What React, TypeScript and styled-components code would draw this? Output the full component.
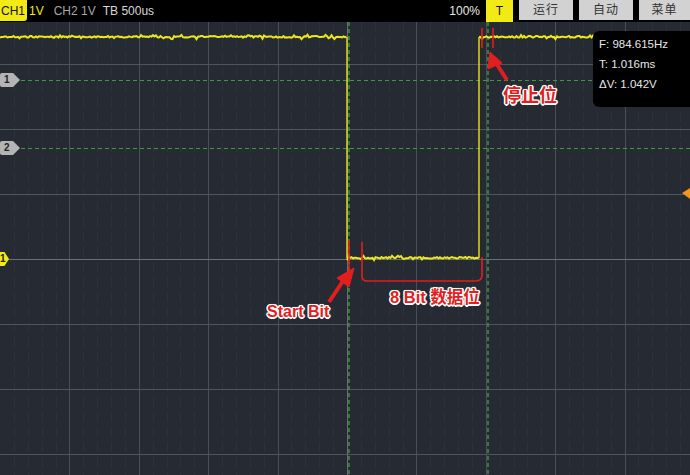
import React from "react";
import styled, { createGlobalStyle } from "styled-components";

const GlobalStyle = createGlobalStyle`
  html, body { margin: 0; padding: 0; background: #000; }
  body { font-family: "Liberation Sans", "Noto Sans CJK SC", sans-serif; }
`;

const W = 690;
const H = 453;
const DIVX = 69.4;
const CY = 237;
const DIVY = 65;

const Screen = styled.div`
  width: 690px;
  height: 475px;
  display: flex;
  flex-direction: column;
  background: #000;
  overflow: hidden;
`;

const Header = styled.div`
  height: 22px;
  flex: none;
  display: flex;
  align-items: flex-start;
  background: #000;
  font-size: 12px;
  line-height: 20px;
`;

const ChBadge = styled.div`
  height: 21px;
  padding: 0 2px 0 1px;
  background: #f2ea17;
  color: #111;
  border-bottom-right-radius: 3px;
  display: flex;
  align-items: center;
`;

const HText = styled.span<{ $color: string; $ml: number }>`
  color: ${(p) => p.$color};
  margin-left: ${(p) => p.$ml}px;
  height: 21px;
  display: flex;
  align-items: center;
`;

const Spacer = styled.div`
  flex: 1;
`;

const TBox = styled.div`
  width: 27px;
  height: 22px;
  margin-left: 6px;
  background: #f2ea17;
  color: #111;
  display: flex;
  align-items: center;
  justify-content: center;
  font-size: 12px;
`;

const MenuButton = styled.div<{ $w: number }>`
  width: ${(p) => p.$w}px;
  height: 20px;
  margin-left: 6px;
  background: #d2d2d2;
  color: #333;
  display: flex;
  align-items: center;
  justify-content: center;
  font-size: 12px;
  letter-spacing: 1px;
`;

const Scope = styled.div`
  position: relative;
  flex: 1;
  background: #262a33;
  overflow: hidden;
`;

const Canvas = styled.svg`
  display: block;
  width: 690px;
  height: 453px;
`;

const Tag = styled.div<{ $top: number; $bg: string; $w: number; $left: number }>`
  position: absolute;
  left: ${(p) => p.$left}px;
  top: ${(p) => p.$top}px;
  width: ${(p) => p.$w}px;
  height: 14px;
  background: ${(p) => p.$bg};
  color: #222;
  font-size: 10px;
  font-weight: bold;
  line-height: 14px;
  padding-left: 4px;
  box-sizing: border-box;
  clip-path: polygon(0 0, 65% 0, 100% 50%, 65% 100%, 0 100%);
  border-radius: 2px;
`;

const InfoBox = styled.div`
  position: absolute;
  left: 593px;
  top: 9px;
  width: 110px;
  height: 76px;
  background: #000;
  border-radius: 6px;
  color: #e6e6e6;
  font-size: 11.5px;
  padding: 6px 0 0 6px;
  box-sizing: border-box;
  display: flex;
  flex-direction: column;
  gap: 6px;
  line-height: 14px;
`;

const Note = styled.div<{ $left: number; $top: number; $size: number }>`
  position: absolute;
  left: ${(p) => p.$left}px;
  top: ${(p) => p.$top}px;
  font-size: ${(p) => p.$size}px;
  font-weight: bold;
  color: #e31e1e;
  white-space: nowrap;
  font-family: "Liberation Sans", "Noto Sans CJK SC", sans-serif;
  text-shadow: -1px -1px 0 #fff, 1px -1px 0 #fff, -1px 1px 0 #fff, 1px 1px 0 #fff,
    0 -1.5px 0 #fff, 0 1.5px 0 #fff, -1.5px 0 0 #fff, 1.5px 0 0 #fff, 0 0 2px #fff;
`;

function rnd(i: number) {
  const s = Math.sin(i * 12.9898 + 78.233) * 43758.5453;
  return s - Math.floor(s);
}

function noisy(x0: number, x1: number, y: number, seed: number) {
  const pts: string[] = [];
  for (let x = x0, k = 0; x <= x1; x += 1.5, k++) {
    const r = rnd(seed + k);
    const dy = r > 0.8 ? (rnd(seed + k * 3) - 0.5) * 4.5 : (r - 0.5) * 2;
    pts.push(`${x.toFixed(1)},${(y + dy).toFixed(1)}`);
  }
  return pts.join(" ");
}

const Grid: React.FC = () => {
  const vs: number[] = [];
  for (let k = 1; k <= 9; k++) vs.push(Math.round(k * DIVX) + 0.5);
  const hs: number[] = [];
  for (let k = -3; k <= 3; k++) hs.push(CY + k * DIVY + 0.5);
  const minorV: number[] = [];
  for (let k = 0; k < 50; k++) if (k % 5 !== 0) minorV.push(Math.round((k * DIVX) / 5) + 0.5);
  return (
    <g>
      {minorV.map((x) => (
        <line key={"mv" + x} x1={x} x2={x} y1={0} y2={H} stroke="#2d313b" strokeWidth={1} strokeDasharray="10 5" />
      ))}
      {vs.map((x) => (
        <line key={"v" + x} x1={x} x2={x} y1={0} y2={H} stroke="#4a4e57" strokeWidth={1} />
      ))}
      {hs.map((y) => (
        <line key={"h" + y} x1={0} x2={W} y1={y} y2={y} stroke="#50545d" strokeWidth={1} />
      ))}
      <line x1={347.5} x2={347.5} y1={0} y2={H} stroke="#6a6e76" strokeWidth={1} />
      <line x1={0} x2={W} y1={CY + 0.5} y2={CY + 0.5} stroke="#6a6e76" strokeWidth={1} />
    </g>
  );
};

const App: React.FC = () => {
  const hi = 15;
  const lo = 236;
  const fallX = 347;
  const riseX = 479;
  return (
    <Screen>
      <GlobalStyle />
      <Header>
        <ChBadge>CH1</ChBadge>
        <HText $color="#f2ea17" $ml={2}>1V</HText>
        <HText $color="#a8a8a8" $ml={10}>CH2 1V</HText>
        <HText $color="#d8d8d8" $ml={7}>TB 500us</HText>
        <Spacer />
        <HText $color="#e8e8e8" $ml={0}>100%</HText>
        <TBox>T</TBox>
        <MenuButton $w={54}>运行</MenuButton>
        <MenuButton $w={54}>自动</MenuButton>
        <MenuButton $w={51}>菜单</MenuButton>
      </Header>
      <Scope>
        <Canvas viewBox={`0 0 ${W} ${H}`}>
          <Grid />
          <line x1={0} x2={W} y1={58.5} y2={58.5} stroke="#3f9a3f" strokeWidth={1.2} strokeDasharray="4 3" />
          <line x1={0} x2={W} y1={126.5} y2={126.5} stroke="#3f9a3f" strokeWidth={1.2} strokeDasharray="4 3" />
          <line x1={349} x2={349} y1={0} y2={H} stroke="#3f9a3f" strokeWidth={1.4} strokeDasharray="4 3" />
          <line x1={488} x2={488} y1={0} y2={H} stroke="#3f9a3f" strokeWidth={1.4} strokeDasharray="4 3" />
          <polyline points={noisy(0, fallX, hi, 1)} fill="none" stroke="#ece81c" strokeWidth={2} />
          <line x1={fallX} x2={fallX} y1={hi} y2={lo} stroke="#dcd81c" strokeWidth={1.5} />
          <polyline points={noisy(fallX, riseX, lo, 700)} fill="none" stroke="#ece81c" strokeWidth={2} />
          <line x1={riseX} x2={riseX} y1={hi} y2={lo} stroke="#dcd81c" strokeWidth={1.5} />
          <polyline points={noisy(riseX, W, hi, 1400)} fill="none" stroke="#ece81c" strokeWidth={2} />
          <g stroke="#e31e1e" strokeWidth={1.6} fill="none">
            <line x1={349} x2={349} y1={218} y2={250} />
            <path d="M 362 220 V 254 Q 362 259 367 259 H 476 Q 482 259 482 253 V 235" />
            <line x1={482} x2={482} y1={6} y2={26} />
            <line x1={493} x2={493} y1={6} y2={26} />
          </g>
          <g fill="#e31e1e" stroke="#e31e1e">
            <line x1={329} y1={280} x2={345} y2={256} strokeWidth={4} />
            <polygon points="354,246 337,256 349,265" strokeWidth={1} />
            <line x1={507} y1={58} x2={496} y2={41} strokeWidth={4} />
            <polygon points="490,30 488,47 502,41" strokeWidth={1} />
          </g>
          <polygon points="682,171 690,166 690,177" fill="#f0961a" />
        </Canvas>
        <Tag $top={51} $bg="#b4b4b4" $w={20} $left={0}>1</Tag>
        <Tag $top={119} $bg="#b4b4b4" $w={20} $left={0}>2</Tag>
        <Tag $top={230} $bg="#f2ea17" $w={13} $left={-4}>1</Tag>
        <InfoBox>
          <div>F: 984.615Hz</div>
          <div>T: 1.016ms</div>
          <div>ΔV: 1.042V</div>
        </InfoBox>
        <Note $left={267} $top={281} $size={16}>Start Bit</Note>
        <Note $left={390} $top={262} $size={16.5}>8 Bit 数据位</Note>
        <Note $left={503} $top={59} $size={18}>停止位</Note>
      </Scope>
    </Screen>
  );
};

export default App;
